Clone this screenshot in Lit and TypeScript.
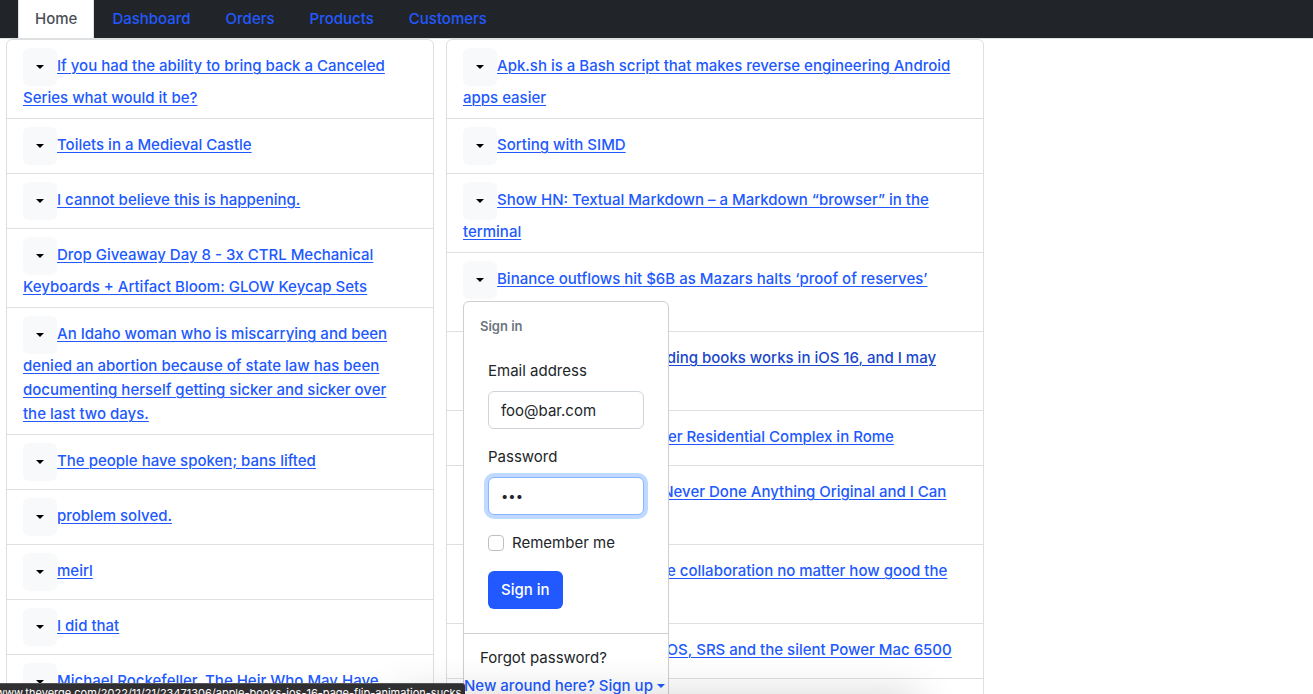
import { LitElement, html, css, nothing } from "lit";
import { customElement, property, state } from "lit/decorators.js";

interface Story {
  title: string;
  active?: boolean;
  menu?: boolean;
}

const LEFT: Story[] = [
  { title: "If you had the ability to bring back a Canceled Series what would it be?" },
  { title: "Toilets in a Medieval Castle" },
  { title: "I cannot believe this is happening." },
  { title: "Drop Giveaway Day 8 - 3x CTRL Mechanical Keyboards + Artifact Bloom: GLOW Keycap Sets" },
  { title: "An Idaho woman who is miscarrying and been denied an abortion because of state law has been documenting herself getting sicker and sicker over the\u00a0last two days." },
  { title: "The people have spoken; bans lifted" },
  { title: "problem solved." },
  { title: "meirl" },
  { title: "I did that" },
  { title: "Michael Rockefeller, The Heir Who May Have Been Eaten By Cannibals" },
];

const RIGHT: Story[] = [
  { title: "Apk.sh is a Bash script that makes reverse engineering Android apps easier" },
  { title: "Sorting with SIMD" },
  { title: "Show HN: Textual Markdown – a Markdown “browser” in the terminal" },
  { title: "Binance outflows hit $6B as Mazars halts ‘proof of reserves’ verification", menu: true },
  { title: "Apple changed how reading books works in iOS 16, and I may never recover", active: true },
  { title: "Corviale, a One-Kilometer Residential Complex in Rome" },
  { title: "At 41 Years Old, I Have Never Done Anything Original and I Can Prove It" },
  { title: "You can’t buy a real-time collaboration no matter how good the software" },
  { title: "Floppy disk drives, MacOS, SRS and the silent Power Mac 6500" },
  { title: "Notes on a small compiler" },
];

@customElement("story-list")
class StoryList extends LitElement {
  @property({ attribute: false }) stories: Story[] = [];

  static styles = css`
    :host {
      display: block;
    }
    .list {
      margin: 0;
      padding: 0;
      list-style: none;
      border: 1px solid #dfdfdf;
      border-radius: 6px;
      background: #fff;
    }
    .item {
      padding: 8px 16px;
    }
    .item + .item {
      border-top: 1px solid #dfdfdf;
    }
    .drop {
      position: relative;
      display: inline-block;
      vertical-align: middle;
    }
    .toggle {
      display: flex;
      align-items: center;
      justify-content: center;
      width: 34px;
      height: 38px;
      padding: 0;
      border: 0;
      border-radius: 6px;
      background: #f8f9fa;
      color: #000;
    }
    .caret {
      border: 4px solid transparent;
      border-top-color: currentColor;
      border-bottom: 0;
    }
    .link {
      color: #2159ff;
      font-weight: 500;
      text-underline-offset: 2px;
      text-decoration-thickness: 1px;
    }
    .link.active {
      color: #1a47cc;
    }
    .menu {
      position: absolute;
      top: 100%;
      left: 0;
      z-index: 10;
      margin-top: 2px;
    }
  `;

  render() {
    return html`<ul class="list">
      ${this.stories.map(
        (s) => html`<li class="item"><span class="drop"><button class="toggle" type="button" aria-label="Story options"><span class="caret"></span></button>${s.menu ? html`<sign-in-menu class="menu"></sign-in-menu>` : nothing}</span><a class="link ${s.active ? "active" : ""}" href="#">${s.title}</a></li>`
      )}
    </ul>`;
  }
}

@customElement("sign-in-menu")
class SignInMenu extends LitElement {
  @state() private email = "foo@bar.com";
  @state() private password = "foo";

  static styles = css`
    :host {
      display: block;
    }
    .panel {
      width: 204px;
      padding: 8px 0;
      border: 1px solid #cfcfcf;
      border-radius: 6px;
      background: #fff;
      color: #212529;
    }
    .header {
      margin: 0;
      padding: 8px 16px;
      font-size: 13px;
      line-height: 17px;
      font-weight: 600;
      color: #6c757d;
    }
    .form {
      display: flex;
      flex-direction: column;
      gap: 16px;
      padding: 16px 24px;
    }
    .field {
      display: flex;
      flex-direction: column;
      gap: 8px;
    }
    .input {
      box-sizing: border-box;
      width: 100%;
      height: 38px;
      padding: 6px 12px;
      border: 1px solid #ced4da;
      border-radius: 6px;
      outline: 0;
      background: #fff;
      color: #212529;
      font: inherit;
    }
    .input.focused {
      border-color: #86b7fe;
      box-shadow: 0 0 0 4px #bfd9ff;
      font-size: 13px;
    }
    .check {
      display: flex;
      align-items: center;
      gap: 8px;
    }
    .box {
      appearance: none;
      box-sizing: border-box;
      width: 16px;
      height: 16px;
      margin: 0;
      border: 1px solid #bfbfbf;
      border-radius: 4px;
      background: #fff;
    }
    .box:checked {
      background: #2159ff;
    }
    .submit {
      align-self: flex-start;
      height: 38px;
      padding: 0 13px;
      border: 0;
      border-radius: 6px;
      background: #2159ff;
      color: #fff;
      font: inherit;
      font-weight: 500;
    }
    .divider {
      height: 0;
      margin: 8px 0;
      border: 0;
      border-top: 1px solid #cfcfcf;
    }
    .entry {
      display: block;
      padding: 4px 16px;
      color: #212529;
      text-decoration: none;
    }
    .signup {
      display: flex;
      align-items: center;
      gap: 4px;
      color: #2159ff;
      font-weight: 500;
      text-decoration: none;
      white-space: nowrap;
    }
    .caret {
      border: 4px solid transparent;
      border-top-color: currentColor;
      border-bottom: 0;
    }
  `;

  render() {
    return html`<div class="panel">
      <h6 class="header">Sign in</h6>
      <form class="form" @submit=${(e: Event) => e.preventDefault()}>
        <div class="field">
          <label for="email">Email address</label>
          <input class="input" id="email" type="email" .value=${this.email} />
        </div>
        <div class="field">
          <label for="password">Password</label>
          <input class="input focused" id="password" type="password" .value=${this.password} />
        </div>
        <div class="check">
          <input class="box" id="remember" type="checkbox" />
          <label for="remember">Remember me</label>
        </div>
        <button class="submit" type="submit">Sign in</button>
      </form>
      <hr class="divider" />
      <a class="entry" href="#">Forgot password?</a>
      <a class="signup" href="#">New around here? Sign up<span class="caret"></span></a>
    </div>`;
  }
}

@customElement("app-root")
class AppRoot extends LitElement {
  static styles = css`
    :host {
      display: block;
      position: relative;
      height: 100vh;
      overflow: hidden;
      background: #fff;
      color: #212529;
      font: 400 15px/24px Inter, "Liberation Sans", sans-serif;
    }
    .tabs {
      display: flex;
      gap: 1px;
      padding: 0 18px;
      border-bottom: 1px solid #dee2e6;
      background: #212529;
    }
    .tab {
      padding: 7px 16px;
      border: 1px solid transparent;
      border-width: 0 1px;
      color: #2159ff;
      font-weight: 500;
      text-decoration: none;
    }
    .tab.current {
      border-color: #dee2e6;
      background: #fff;
      color: #495057;
    }
    .row {
      display: grid;
      grid-template-columns: repeat(12, 1fr);
      margin-right: -7px;
    }
    .col {
      padding: 0 6px;
    }
    .col.four {
      grid-column: span 4;
    }
    .col.five {
      grid-column: span 5;
    }
    .shade {
      position: absolute;
      top: 100%;
      left: 30%;
      right: 30%;
      z-index: 15;
      height: 80px;
      box-shadow: 0 0 40px rgba(0, 0, 0, 0.16);
    }
    .status {
      position: absolute;
      left: 0;
      bottom: 0;
      z-index: 20;
      height: 10px;
      overflow: hidden;
      padding-right: 4px;
      border-top: 1px solid #555;
      border-radius: 0 3px 0 0;
      background: #303032;
      color: #fff;
      font-size: 11px;
      line-height: 18px;
      text-indent: -4px;
      white-space: nowrap;
    }
  `;

  render() {
    const tabs = ["Home", "Dashboard", "Orders", "Products", "Customers"];
    return html`
      <nav class="tabs">
        ${tabs.map((t, i) => html`<a class="tab ${i === 0 ? "current" : ""}" href="#">${t}</a>`)}
      </nav>
      <main class="row">
        <div class="col four"><story-list .stories=${LEFT}></story-list></div>
        <div class="col five"><story-list .stories=${RIGHT}></story-list></div>
      </main>
      <div class="shade"></div>
      <div class="status">www.theverge.com/2022/11/21/23471306/apple-books-ios-16-page-flip-animation-sucks</div>
    `;
  }
}
